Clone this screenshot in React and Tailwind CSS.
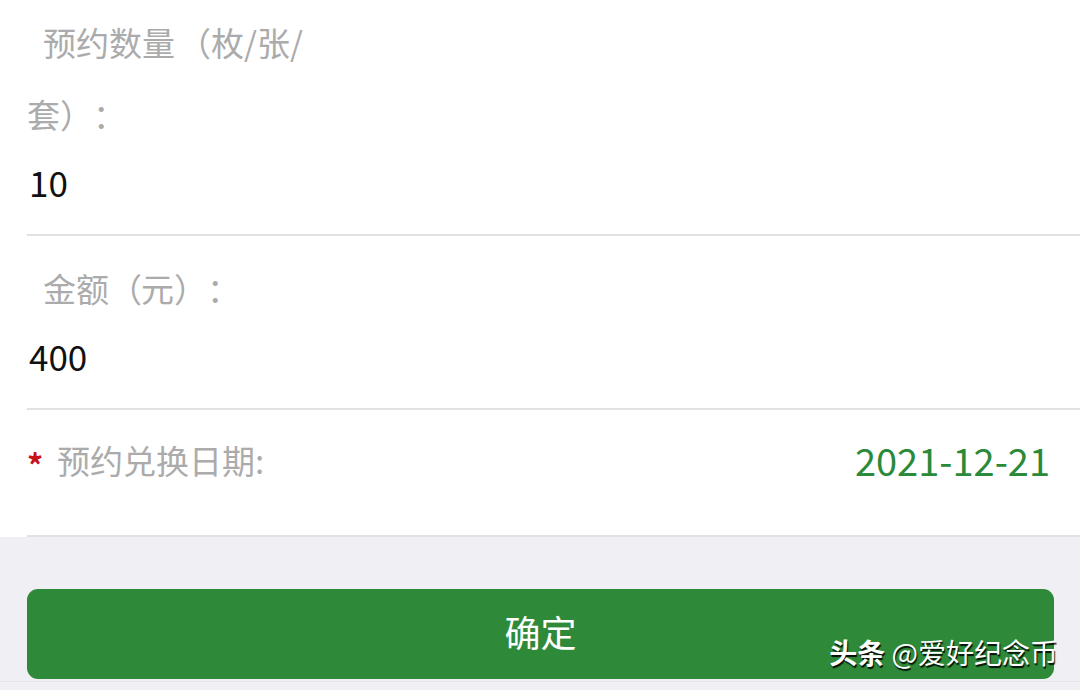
import React from 'react'

const font = { fontFamily: '"Noto Sans CJK SC", "Noto Sans", sans-serif' }

const FieldItem = ({ label, value, first }) => {
    return (
        <div className={`${first ? 'pt-[6px]' : 'pt-[16px]'} pb-[20px] border-b-2 border-[#e2e2e2]`}>
            <p className="w-[290px] indent-[16px] text-[33px] leading-[72px] text-[#ababab] [text-spacing-trim:space-all]">{label}</p>
            <p className="text-[35px] leading-[64px] text-[#111] pl-[2px]">{value}</p>
        </div>
    )
}

const App = () => {
    return (
        <div style={font} className="w-[1080px] h-[690px] overflow-hidden bg-[#efeff4] relative">
            <div className="bg-white pl-[27px]">
                <FieldItem
                    first
                    label={<>预约数量<span className="inline-block indent-0 w-[36px] text-right">（</span>枚/张/套）：</>}
                    value="10"
                />
                <FieldItem
                    label={<>金额<span className="inline-block indent-0 w-[32px] text-right">（</span>元）：</>}
                    value="400"
                />
                <div className="flex items-start pt-[14px] pb-[35px] pr-[30px] border-b-2 border-[#e2e2e2]">
                    <span className="text-[#c8121a] text-[32px] font-bold leading-[72px] w-[30px] pt-[4px]">*</span>
                    <span className="text-[33px] leading-[72px] text-[#ababab]">预约兑换日期:</span>
                    <span className="ml-auto text-[38px] leading-[72px] text-[#2a8a3a]">2021-12-21</span>
                </div>
            </div>

            <div className="px-[27px] pr-[26px] pt-[52px]">
                <button className="w-full h-[90px] pb-[6px] rounded-[11px] bg-[#2e8a38] text-white text-[36px]">
                    确定
                </button>
            </div>
            <div className="mt-[2px] border-t border-[#e4e4e8]"></div>

            <div className="absolute right-[22px] top-[632px] text-white text-[28px] leading-[40px] [text-shadow:1px_2px_1px_rgba(0,0,0,0.9)]">
                <span className="font-bold">头条</span> @爱好纪念币
            </div>
        </div>
    )
}

export default App
